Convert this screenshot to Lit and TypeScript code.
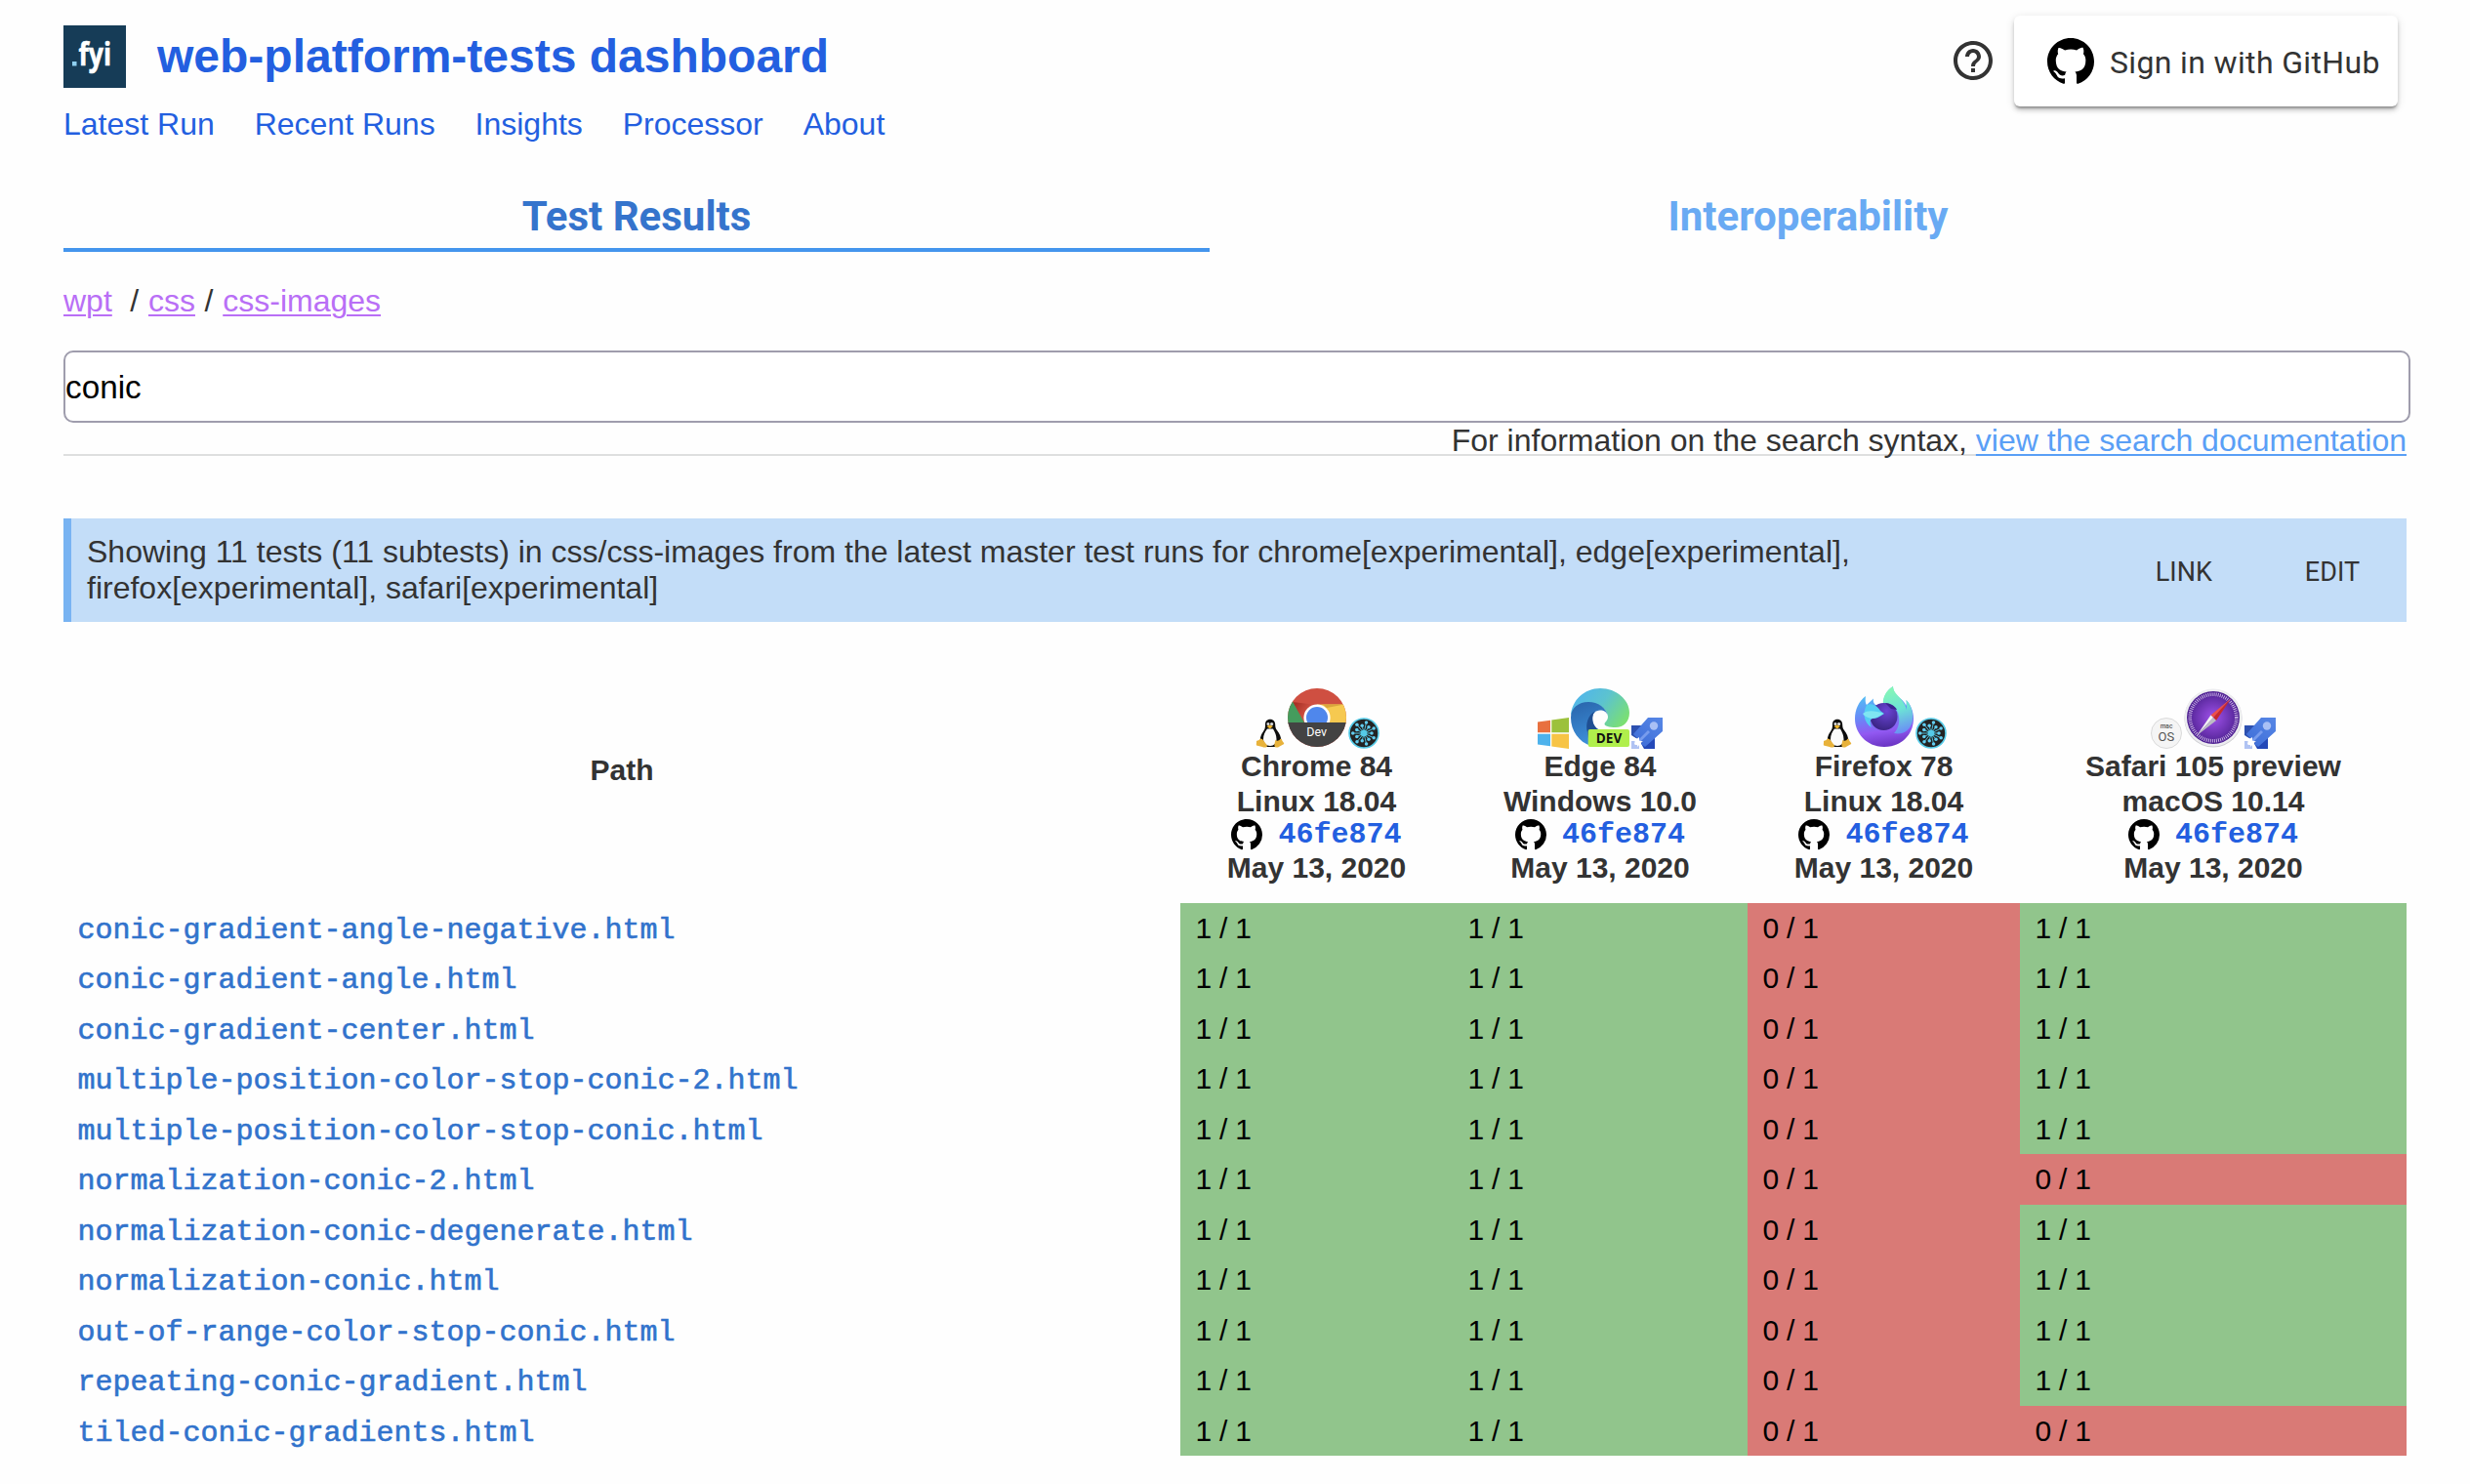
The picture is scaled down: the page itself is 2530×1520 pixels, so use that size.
import { LitElement, html, css, svg } from "lit";
import { customElement, property } from "lit/decorators.js";
import { classMap } from "lit/directives/class-map.js";

type BrowserName = "chrome" | "edge" | "firefox" | "safari";
type IconName = BrowserName | "linux" | "windows" | "macos" | "taskcluster" | "azure" | "github" | "help" | "fyi";

interface Run {
  browser: BrowserName;
  os: IconName;
  source: IconName;
  title: string;
  platform: string;
}

const NAV = ["Latest Run", "Recent Runs", "Insights", "Processor", "About"];

const RUNS: Run[] = [
  { browser: "chrome", os: "linux", source: "taskcluster", title: "Chrome 84", platform: "Linux 18.04" },
  { browser: "edge", os: "windows", source: "azure", title: "Edge 84", platform: "Windows 10.0" },
  { browser: "firefox", os: "linux", source: "taskcluster", title: "Firefox 78", platform: "Linux 18.04" },
  { browser: "safari", os: "macos", source: "azure", title: "Safari 105 preview", platform: "macOS 10.14" },
];

const TESTS: [string, number[]][] = [
  ["conic-gradient-angle-negative.html", [1, 1, 0, 1]],
  ["conic-gradient-angle.html", [1, 1, 0, 1]],
  ["conic-gradient-center.html", [1, 1, 0, 1]],
  ["multiple-position-color-stop-conic-2.html", [1, 1, 0, 1]],
  ["multiple-position-color-stop-conic.html", [1, 1, 0, 1]],
  ["normalization-conic-2.html", [1, 1, 0, 0]],
  ["normalization-conic-degenerate.html", [1, 1, 0, 1]],
  ["normalization-conic.html", [1, 1, 0, 1]],
  ["out-of-range-color-stop-conic.html", [1, 1, 0, 1]],
  ["repeating-conic-gradient.html", [1, 1, 0, 1]],
  ["tiled-conic-gradients.html", [1, 1, 0, 0]],
];

const SPOKES = Array.from({ length: 14 }, (_, i) => {
  const angle = (i / 14) * Math.PI * 2 - 1.35;
  const length = i % 2 ? 8 : 11.3;
  return { x: 16 + Math.cos(angle) * length, y: 16 + Math.sin(angle) * length };
});

const ICONS: Record<IconName, { box: string; art: unknown }> = {
  fyi: {
    box: "0 0 64 64",
    art: svg`
      <rect width="64" height="64" fill="#163c57" />
      <rect x="9" y="37" width="4.5" height="4.5" fill="#8fd0f0" />
      <text x="15.5" y="40.500" class="fyi" textLength="33.5" lengthAdjust="spacingAndGlyphs">fyi</text>`,
  },
  help: {
    box: "0 0 24 24",
    art: svg`<path fill="#333" d="M11 18h2v-2h-2v2zm1-16C6.48 2 2 6.48 2 12s4.48 10 10 10 10-4.48 10-10S17.52 2 12 2zm0 18c-4.41 0-8-3.59-8-8s3.59-8 8-8 8 3.59 8 8-3.59 8-8 8zm0-14c-2.21 0-4 1.79-4 4h2c0-1.1.9-2 2-2s2 .9 2 2c0 2-3 1.75-3 5h2c0-2.25 3-2.5 3-5 0-2.21-1.79-4-4-4z" />`,
  },
  github: {
    box: "0 0 16 16",
    art: svg`<path fill="#000" fill-rule="evenodd" d="M8 0C3.58 0 0 3.58 0 8c0 3.54 2.29 6.53 5.47 7.59.4.07.55-.17.55-.38 0-.19-.01-.82-.01-1.49-2.01.37-2.53-.49-2.69-.94-.09-.23-.48-.94-.82-1.13-.28-.15-.68-.52-.01-.53.63-.01 1.08.58 1.23.82.72 1.21 1.87.87 2.33.66.07-.52.28-.87.51-1.07-1.78-.2-3.64-.89-3.64-3.95 0-.87.31-1.59.82-2.15-.08-.2-.36-1.02.08-2.12 0 0 .67-.21 2.2.82.64-.18 1.32-.27 2-.27s1.36.09 2 .27c1.53-1.04 2.2-.82 2.2-.82.44 1.1.16 1.92.08 2.12.51.56.82 1.27.82 2.15 0 3.07-1.87 3.75-3.65 3.95.29.25.54.73.54 1.48 0 1.07-.01 1.93-.01 2.2 0 .21.15.46.55.38A8.01 8.01 0 0 0 16 8c0-4.42-3.58-8-8-8z" />`,
  },
  chrome: {
    box: "0 0 60 60",
    art: svg`
      <defs>
        <clipPath id="disc"><circle cx="30" cy="30" r="30" /></clipPath>
        <linearGradient id="redShade" x1="0" y1="0.3" x2="0.5" y2="0.6">
          <stop offset="0" stop-color="#a83226" /><stop offset="1" stop-color="#cf4f41" />
        </linearGradient>
      </defs>
      <g clip-path="url(#disc)">
        <rect width="60" height="60" fill="#cf4f41" />
        <path d="M5 14L30 17L16 36z" fill="url(#redShade)" />
        <path d="M0 0L5.5 14.5L17.5 36H0z" fill="#459c5d" />
        <path d="M30 16.5H60V36H30z" fill="#f6c950" />
        <path d="M36 16.5H58L40 20z" fill="#d9a63c" />
        <circle cx="30" cy="30" r="13.6" fill="#fff" />
        <circle cx="30" cy="30" r="11" fill="#4f87ec" />
        <rect y="35" width="60" height="25" fill="#434343" />
      </g>
      <text x="29.7" y="49.2" class="dev">Dev</text>`,
  },
  edge: {
    box: "0 0 60 60",
    art: svg`
      <defs>
        <linearGradient id="wave" x1="0" y1="0.2" x2="1" y2="0.7">
          <stop offset="0" stop-color="#4fb4ee" /><stop offset="0.5" stop-color="#5cc3cf" /><stop offset="1" stop-color="#7be072" />
        </linearGradient>
        <linearGradient id="sea" x1="0.2" y1="0" x2="0.5" y2="1">
          <stop offset="0" stop-color="#2a66ad" /><stop offset="1" stop-color="#3f93dd" />
        </linearGradient>
      </defs>
      <path fill="url(#wave)" d="M0 28C1 12 14 0 30 0C47 0 60 12 60 25C60 34 54 40 46 40C39 40 34.5 38.5 34.5 36.5C34.5 35 38 33 38 29C38 22 28 14 18 15C8 16 3 20 0 28Z" />
      <path fill="url(#sea)" d="M0 30C0 20 8 14 18 14C28 14 36 20 38 28C36.500 24 34 22.500 30 22.500C25 22.500 22 26 22 31C22 37 25 41 30 43L24 60C10 57 0 45 0 30Z" />
      <path fill="#1f4f92" d="M25 23.500C18 27 14.500 36 17 45L19 58L30 46L30 43C25 41 22 36 22.300 30C22.500 27 23.500 25 25 23.500Z" />
      <rect x="17.700" y="42" width="42.300" height="18" rx="2" fill="#b0ef4c" />
      <text x="39" y="55.900" class="devBold">DEV</text>`,
  },
  firefox: {
    box: "0 0 60 62",
    art: svg`
      <defs>
        <linearGradient id="coat" x1="0.3" y1="0" x2="0.45" y2="1">
          <stop offset="0.1" stop-color="#4fc3f5" /><stop offset="0.5" stop-color="#6a86f7" /><stop offset="0.75" stop-color="#9259f2" /><stop offset="1" stop-color="#6b35c4" />
        </linearGradient>
        <linearGradient id="flame" x1="0.4" y1="0" x2="0.6" y2="1">
          <stop offset="0" stop-color="#86f7b4" /><stop offset="0.5" stop-color="#6ce3d6" /><stop offset="1" stop-color="#6a8cf6" />
        </linearGradient>
        <radialGradient id="globe" cx="0.6" cy="0.3" r="0.8">
          <stop offset="0" stop-color="#6b46d6" /><stop offset="1" stop-color="#34207a" />
        </radialGradient>
      </defs>
      <path fill="url(#coat)" d="M11 10C10.500 14 10.500 17 12 19L19 12.500C18.500 15 19 17 20.500 18.500C24 20 29 22 30 18C28 13 32 4 39 0C39 5 42 9 46 12C50 15 52 18 52 20C53 18 53 16 52.500 14C57 18 60 26 60 33C60 50 47 62 30 62C13 62 0 49 0 33C0 24 4 15 11 10Z" />
      <path fill="url(#flame)" d="M29 18C28 12 32 4 39 0C39 8 50 12 53 24C53 20 53 17 52.500 14C58 20 60 28 59 35C57 46 48 50 40 48C48 40 46 26 40 21C37 18 33 17 29 18Z" />
      <circle cx="29.500" cy="31" r="14" fill="url(#globe)" />
      <path fill="#3a2390" d="M31 17C36 17 41 20 43 24L37 23z" />
      <path fill="#54cdf3" d="M12 19C17 17 23 20 26 25L30 28C26 30 24 33 18 33C15 34 15 38 17 42C10 38 7 28 12 19Z" />
      <path fill="#7fe6f2" d="M8 28C13 24 21 25 29.500 28C25 30 22 33 17 33C13 32 10 31 8 28Z" />`,
  },
  safari: {
    box: "0 0 60 60",
    art: svg`
      <defs>
        <radialGradient id="dial"><stop offset="0" stop-color="#a052ea" /><stop offset="1" stop-color="#4e2191" /></radialGradient>
      </defs>
      <circle cx="30" cy="30.800" r="29.600" fill="#cfcfd2" />
      <circle cx="30" cy="30" r="29.400" fill="#ededf0" />
      <circle cx="30" cy="30" r="27" fill="url(#dial)" />
      <circle cx="30" cy="30" r="23.800" fill="none" stroke="#d9c8ee" stroke-width="3.600" stroke-dasharray="0.800 1.277" />
      <path fill="#ed5048" d="M48 10.500L27.500 27.500L30 30z" />
      <path fill="#c92a2a" d="M48 10.500L30 30L33 33z" />
      <path fill="#f4f4f4" d="M13 48.500L27.500 27.500L30 30z" />
      <path fill="#bdbdc4" d="M13 48.500L30 30L33 33z" />`,
  },
  linux: {
    box: "0 0 32 32",
    art: svg`
      <path fill="#0c0c0c" d="M16 1.700C12.500 1.700 11 4 11 7C11 11 10.500 12 8.500 15C6.500 18 5.500 21 6 24L12 30H22L27.500 25C27.500 20 25.500 16 23 13C21.300 11 21.300 9 21.200 7C21 4 19.500 1.700 16 1.700Z" />
      <path fill="#fbfbfb" d="M13 11.500C10.500 15 9 18 9 22C9 26 12 29 16 29C20 29 22.500 26 22.500 22C22.500 18 20.500 14 19 11.500z" />
      <circle cx="14" cy="6.600" r="1.500" fill="#ddd" /><circle cx="17.600" cy="6.600" r="1.600" fill="#ddd" />
      <path fill="#f0b72c" d="M12.500 9L15.700 7.500L19 9L15.800 11.600z" />
      <path fill="#e8b23a" d="M6 21.500L8 22L13 28.500C13 31 10 31 8 30L2 28.500C1.500 27 2.200 26 2 24C3.500 23.500 5 23 6 21.500Z" />
      <path fill="#e8b23a" d="M21.500 22.500C22 24.500 25.500 24 26.500 21.500L28 22.500C28 24.500 30.500 25.500 30.200 27L24 30.500C21 31 20 29.500 20.500 27z" />`,
  },
  windows: {
    box: "0 0 32 32",
    art: svg`
      <path fill="#e8703f" d="M0 4.600L13 2.700V15.300H0z" />
      <path fill="#9cc13c" d="M14.300 2.500L32 0V15.300H14.300z" />
      <path fill="#4db2ec" d="M0 16.700H13V29.300L0 27.400z" />
      <path fill="#f7c445" d="M14.300 16.700H32V32L14.300 29.500z" />`,
  },
  macos: {
    box: "0 0 32 32",
    art: svg`
      <circle cx="16" cy="16" r="15.500" fill="#f5f5f5" stroke="#dadada" />
      <text x="16" y="11.300" class="mac">mac</text>
      <text x="15.800" y="23.800" class="os">OS</text>`,
  },
  taskcluster: {
    box: "0 0 32 32",
    art: svg`
      <circle cx="16" cy="16" r="15" fill="#232323" stroke="#55cbe8" stroke-width="1.600" />
      ${SPOKES.map((p) => svg`
        <line x1="16" y1="16" x2=${p.x} y2=${p.y} stroke="#55cbe8" stroke-width="0.900" />
        <circle cx=${p.x} cy=${p.y} r="1.750" fill="#62cdf0" />`)}
      <circle cx="16" cy="16" r="3.300" fill="#55cbe8" />`,
  },
  azure: {
    box: "0 0 32 32",
    art: svg`
      <defs>
        <linearGradient id="hull" x1="1" y1="0" x2="0.2" y2="1"><stop offset="0" stop-color="#5787e6" /><stop offset="1" stop-color="#3f6ed8" /></linearGradient>
      </defs>
      <path fill="#2c50b0" d="M0 8H14L6 22L0 18z" />
      <path fill="#2449b8" d="M24 17V32H13L9 25z" />
      <path fill="url(#hull)" d="M17 0H32V14L14 30L10 27L12 24L8 25L5 20L2 17z" />
      <circle cx="23" cy="8.500" r="4.200" fill="#a9c0f5" />
      <path fill="#789ced" d="M17 13L19 15L9 25L7 23z" />
      <path fill="#b0c3f3" d="M0 24L3.500 24V28H8V32H0z" />
      <path fill="#fff" d="M3 20.500L6 21.500L8 20L8 23.500L12 24.500L9.500 26L11 29.500L8 28L6.500 30L5.500 27L3 27L4.500 24z" />`,
  },
};

@customElement("wpt-icon")
export class WptIcon extends LitElement {
  @property() name: IconName = "github";

  static styles = css`
    :host { display: block; flex: none; }
    .art { display: block; width: 100%; height: 100%; overflow: visible; }
    .fyi { font: 700 33px "Open Sans", sans-serif; fill: #fff; stroke: #fff; stroke-width: 0.6px; }
    .dev { font: 400 12.5px Roboto, sans-serif; fill: #fff; text-anchor: middle; }
    .devBold { font: 700 13.6px "Open Sans", sans-serif; fill: #111; text-anchor: middle; }
    .mac { font: 500 6.6px Roboto, sans-serif; fill: #555; text-anchor: middle; }
    .os { font: 400 13px Roboto, sans-serif; fill: #555; text-anchor: middle; }
  `;

  render() {
    const icon = ICONS[this.name];
    return html`<svg class="art" viewBox=${icon.box} aria-hidden="true">${icon.art}</svg>`;
  }
}

@customElement("wpt-run-header")
export class WptRunHeader extends LitElement {
  @property({ attribute: false }) run!: Run;

  static styles = css`
    :host { display: flex; flex-direction: column; align-items: center; padding-bottom: 18px; font: 700 30px/36px "Liberation Sans", Arial, sans-serif; color: #333; }
    .icons { display: flex; align-items: flex-end; gap: 2px; height: 62px; }
    .small { width: 32px; height: 32px; }
    .large { width: 60px; height: 60px; margin-bottom: 2px; }
    .tall { height: 62px; }
    .commit { display: flex; align-items: center; gap: 16px; height: 32px; }
    .sha { font: 700 30px/32px "Liberation Mono", "Courier New", monospace; color: #235fe0; }
  `;

  render() {
    const { os, browser, source, title, platform } = this.run;
    return html`
      <div class="icons">
        <wpt-icon class="small" .name=${os}></wpt-icon>
        <wpt-icon class=${classMap({ large: true, tall: browser === "firefox" })} .name=${browser}></wpt-icon>
        <wpt-icon class="small" .name=${source}></wpt-icon>
      </div>
      <div>${title}</div>
      <div>${platform}</div>
      <div class="commit">
        <wpt-icon class="small" .name=${"github"}></wpt-icon>
        <span class="sha">46fe874</span>
      </div>
      <div>May 13, 2020</div>
    `;
  }
}

@customElement("app-root")
export class AppRoot extends LitElement {
  static styles = css`
    :host { display: block; box-sizing: border-box; min-height: 1520px; padding: 16px 65px 0; background: #fefefe; color: #333; font: 32px/37px "Liberation Sans", Arial, sans-serif; }
    .top { display: flex; justify-content: space-between; align-items: flex-start; height: 169px; }
    .brand { display: flex; gap: 32px; align-items: center; padding-top: 10px; }
    .logo { width: 64px; height: 64px; }
    .title { margin: 0; font-size: 48px; line-height: 64px; height: 64px; color: #235fe0; }
    .nav { display: flex; gap: 40.9px; margin-top: 19px; color: #235fe0; }
    .account { display: flex; align-items: center; gap: 18px; padding-right: 9px; }
    .help { width: 48px; height: 48px; margin-bottom: 1px; }
    .signin { display: flex; align-items: center; gap: 16px; box-sizing: border-box; width: 393px; height: 93px; padding-left: 34px; border-radius: 6px; background: #fff; box-shadow: 0 4px 4px rgba(0,0,0,.16), 0 2px 10px rgba(0,0,0,.12), 0 3px 2px -1px rgba(0,0,0,.25); font-family: Roboto, sans-serif; font-size: 32px; letter-spacing: 0.35px; white-space: nowrap; }
    .label { padding-top: 3px; }
    .mark { width: 48px; height: 48px; }
    .tabs { display: grid; grid-template-columns: 1174px 1226px; text-align: center; font: 700 42px/73px Roboto, sans-serif; }
    .tab { height: 69px; border-bottom: 4px solid transparent; color: #69aaf3; }
    .active { color: #3574cc; border-color: #4495ed; }
    .crumbs { display: flex; margin-top: 32px; white-space: pre; }
    .crumb { color: #b96ff6; text-decoration: underline; text-decoration-thickness: 2px; text-underline-offset: 3px; }
    .slash { padding: 0 1px 0 0.6px; }
    .search { display: block; box-sizing: border-box; width: 2404px; height: 74px; margin: 32px 0 0; padding: 1px 0 0; border: 2px solid #9f9dad; border-radius: 10px; background: #fff; color: #000; font: 33.3px "Liberation Sans", Arial, sans-serif; }
    .hint { height: 32px; border-bottom: 2px solid #dedfdf; text-align: right; }
    .doc { color: #5a9ff6; text-decoration: underline; text-decoration-thickness: 2px; text-underline-offset: 3px; }
    .banner { display: flex; justify-content: space-between; align-items: center; box-sizing: border-box; height: 106px; margin-top: 64px; padding: 0 48px 0 16px; border-left: 8px solid #78b3f2; background: #c3ddf8; }
    .summary { width: 1900px; }
    .actions { display: flex; gap: 95px; padding-top: 3px; font: 400 27px/36px Roboto, sans-serif; }
    .results { display: grid; grid-template-columns: 1144px 279px 302px 279px 396px; font-size: 30px; }
    .head { padding-top: 68px; }
    .path { display: flex; align-items: center; justify-content: center; font-weight: 700; padding-bottom: 53px; line-height: 36px; padding-top: 68px; }
    .name, .score { box-sizing: border-box; height: 51.4545px; line-height: 51.4545px; }
    .name { padding: 3px 0 0 14.5px; font-family: "Liberation Mono", "Courier New", monospace; color: #3173cc; -webkit-text-stroke: 0.6px #3173cc; }
    .score { padding-left: 15.5px; color: #000; background: #91c58c; word-spacing: -0.5px; }
    .fail { background: #d97a76; }
  `;

  render() {
    return html`
      <header class="top">
        <div>
          <div class="brand">
            <wpt-icon class="logo" .name=${"fyi"}></wpt-icon>
            <h1 class="title">web-platform-tests dashboard</h1>
          </div>
          <nav class="nav">${NAV.map((item) => html`<span>${item}</span>`)}</nav>
        </div>
        <div class="account">
          <wpt-icon class="help" .name=${"help"}></wpt-icon>
          <div class="signin"><wpt-icon class="mark" .name=${"github"}></wpt-icon><span class="label">Sign in with GitHub</span></div>
        </div>
      </header>
      <div class="tabs">
        <div class="tab active">Test Results</div>
        <div class="tab">Interoperability</div>
      </div>
      <div class="crumbs"><span class="crumb">wpt</span><span class="slash">  / </span><span class="crumb">css</span><span class="slash"> / </span><span class="crumb">css-images</span></div>
      <input class="search" .value=${"conic"} />
      <div class="hint">For information on the search syntax, <span class="doc">view the search documentation</span></div>
      <div class="banner">
        <div class="summary">Showing 11 tests (11 subtests) in css/css-images from the latest master test runs for chrome[experimental], edge[experimental], firefox[experimental], safari[experimental]</div>
        <div class="actions"><span>LINK</span><span>EDIT</span></div>
      </div>
      <div class="results">
        <div class="path">Path</div>
        ${RUNS.map((run) => html`<wpt-run-header class="head" .run=${run}></wpt-run-header>`)}
        ${TESTS.map(([name, passes]) => html`
          <div class="name">${name}</div>
          ${passes.map((pass) => html`<div class=${classMap({ score: true, fail: !pass })}>${pass} / 1</div>`)}
        `)}
      </div>
    `;
  }
}
